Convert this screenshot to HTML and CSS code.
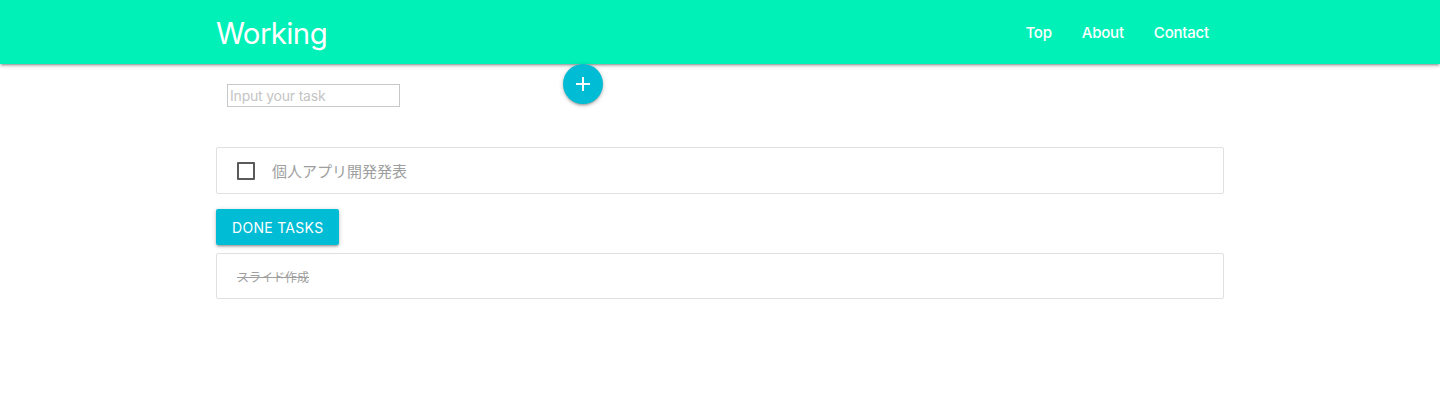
FILE: index.html
```html
<!DOCTYPE html>
<html lang="ja">
<head>
<meta charset="utf-8">
<title>Working</title>
<link rel="stylesheet" href="styles.css">
</head>
<body>
<nav class="nav">
  <div class="container nav-wrapper">
    <a class="brand" href="#">Working</a>
    <ul class="nav-links">
      <li><a href="#">Top</a></li>
      <li><a href="#">About</a></li>
      <li><a href="#">Contact</a></li>
    </ul>
  </div>
</nav>
<main class="container">
  <div class="add-row">
    <input class="task-input" type="text" placeholder="Input your task">
    <button class="fab" aria-label="add">
      <svg width="16" height="16" viewBox="0 0 16 16"><path d="M8 1v14M1 8h14" stroke="#fff" stroke-width="2" fill="none"/></svg>
    </button>
  </div>
  <ul class="collection">
    <li class="collection-item">
      <span class="checkbox"></span>
      <span class="task-text">個人アプリ開発発表</span>
    </li>
  </ul>
  <button class="btn">Done tasks</button>
  <ul class="collection done">
    <li class="collection-item">
      <span class="done-text">スライド作成</span>
    </li>
  </ul>
</main>
</body>
</html>
```
FILE: styles.css
```css
* { box-sizing: border-box; }
body {
  margin: 0;
  font-family: Inter, "Noto Sans CJK JP", sans-serif;
  background: #fff;
}
.container {
  width: 70%;
  margin: 0 auto;
}
.nav {
  height: 64px;
  background: #00f1b8;
  box-shadow: 0 2px 2px 0 rgba(0,0,0,0.14), 0 3px 1px -2px rgba(0,0,0,0.12), 0 1px 5px 0 rgba(0,0,0,0.2);
  position: relative;
  z-index: 1;
}
.nav-wrapper {
  height: 64px;
  display: flex;
  align-items: center;
  justify-content: space-between;
}
.brand {
  color: #fff;
  text-decoration: none;
  font-size: 29.4px;
  letter-spacing: -0.6px;
  position: relative;
  top: 1px;
}
.nav-links {
  list-style: none;
  margin: 0;
  padding: 0;
  display: flex;
}
.nav-links a {
  display: block;
  padding: 0 15px;
  color: #fff;
  text-decoration: none;
  font-size: 15px;
  font-weight: 500;
  line-height: 67px;
  letter-spacing: -0.2px;
}
.add-row {
  display: flex;
  align-items: flex-start;
  height: 83px;
}
.task-input {
  margin: 20px 0 0 11px;
  width: 173px;
  height: 23px;
  border: 1px solid #c8c8c8;
  padding: 1px 2px;
  font-family: Inter, sans-serif;
  font-size: 14px;
  letter-spacing: -0.2px;
  color: #333;
  outline: none;
}
.task-input::placeholder { color: #c4c4c4; }
.fab {
  margin: 0 0 0 163px;
  width: 40px;
  height: 40px;
  border-radius: 50%;
  border: none;
  background: #00bcd4;
  display: flex;
  align-items: center;
  justify-content: center;
  padding: 0;
  box-shadow: 0 2px 2px 0 rgba(0,0,0,0.14), 0 3px 1px -2px rgba(0,0,0,0.12), 0 1px 5px 0 rgba(0,0,0,0.2);
  position: relative;
  z-index: 2;
}
.collection {
  list-style: none;
  margin: 0;
  padding: 0;
  border: 1px solid #e0e0e0;
  border-radius: 2px;
}
.collection-item {
  display: flex;
  align-items: center;
  height: 45px;
  padding: 0 20px;
}
.checkbox {
  width: 18px;
  height: 18px;
  border: 2px solid #5a5a5a;
  border-radius: 1px;
  margin-right: 17px;
}
.task-text {
  font-size: 15px;
  color: #9e9e9e;
}
.btn {
  margin: 15px 0 8px;
  height: 36px;
  padding: 0 16px;
  border: none;
  border-radius: 2px;
  background: #00bcd4;
  color: #fff;
  text-transform: uppercase;
  font-family: Inter, sans-serif;
  font-size: 14px;
  letter-spacing: 0.3px;
  box-shadow: 0 2px 2px 0 rgba(0,0,0,0.14), 0 3px 1px -2px rgba(0,0,0,0.12), 0 1px 5px 0 rgba(0,0,0,0.2);
}
.done .collection-item { height: 44px; }
.done-text {
  font-size: 12px;
  color: #9e9e9e;
  text-decoration: line-through;
}
```
